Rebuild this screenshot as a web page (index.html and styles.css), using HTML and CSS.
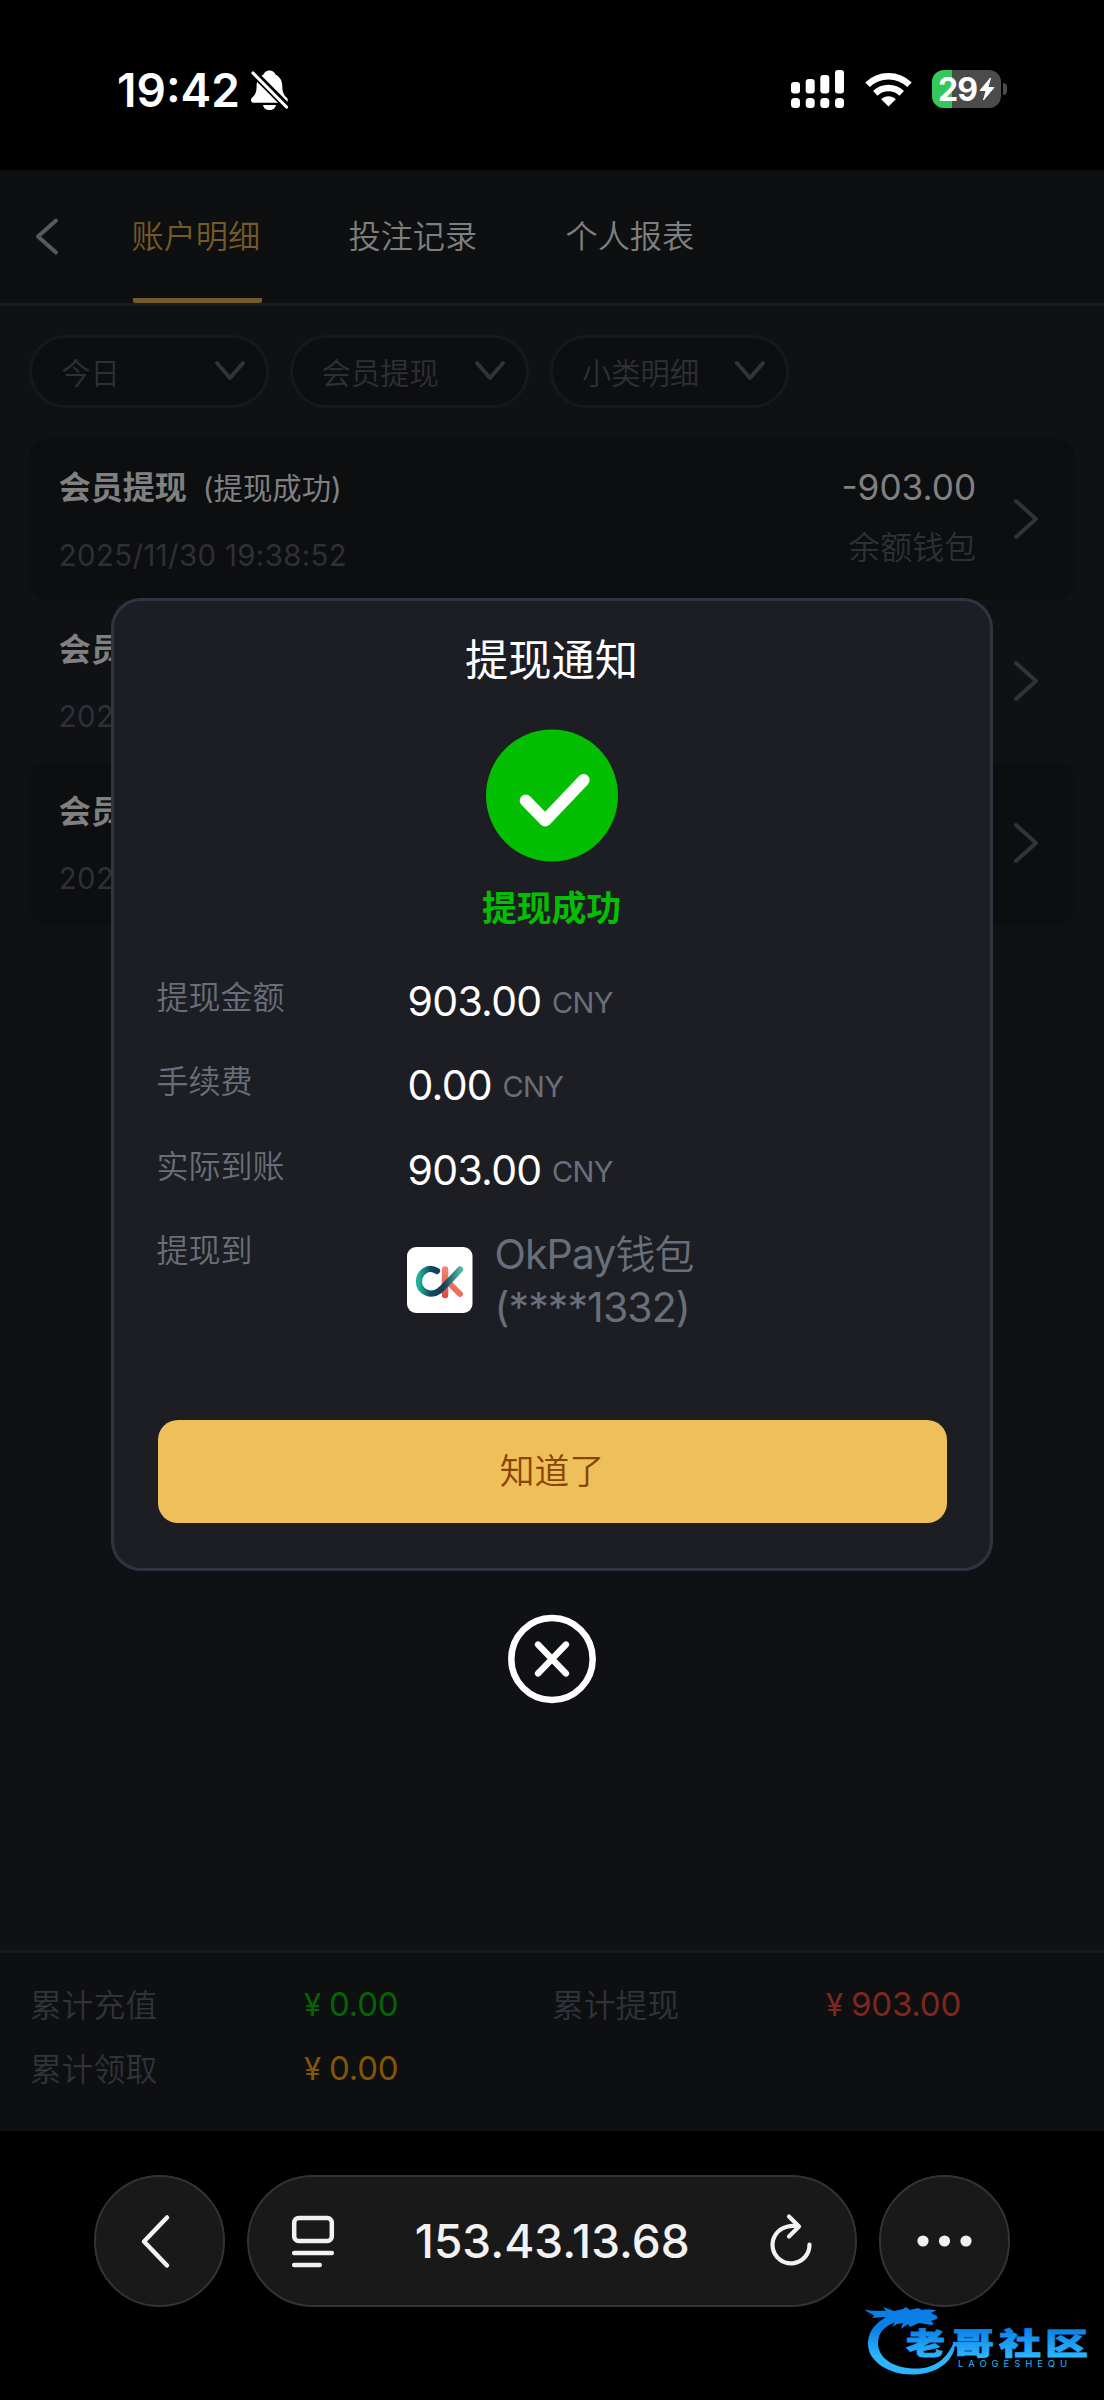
FILE: index.html
```html
<!DOCTYPE html>
<html lang="zh-CN">
<head>
<meta charset="utf-8">
<meta name="viewport" content="width=device-width, initial-scale=1">
<title>账户明细</title>
<link rel="stylesheet" href="styles.css">
</head>
<body>
<div class="screen">
  <div class="status">
    <div class="status-left">
      <span class="clock">19:42</span>
      <svg class="bell" width="38" height="40" viewBox="0 0 38 40">
        <path fill="#fff" d="M18.500 .5c3.600 0 5.200 2.300 6.200 4.200 4.400 2 6.600 6.300 6.600 11.300 0 6.800 1.700 9 4.300 11.600 1 1 1.200 1.700 1.200 2.600 0 1.500-1 2.600-3 2.600H3c-2 0-3-1.100-3-2.600 0-.9.300-1.600 1.200-2.600C4 25 5.600 22.800 5.600 16c0-5 2.300-9.300 6.700-11.300 1-1.900 2.600-4.200 6.200-4.200zM12 35h13c-.5 3-3 5-6.500 5S12.500 38 12 35z"/>
        <path stroke="#000" stroke-width="7.500" d="M2 2.500 38 38.500"/>
        <path stroke="#fff" stroke-width="3.200" stroke-linecap="round" d="M2 3 35.500 37"/>
      </svg>
    </div>
    <div class="status-right">
      <svg class="signal" width="54" height="38" viewBox="0 0 54 38" fill="#fff">
        <rect x="0" y="12" width="9" height="11.500" rx="3"/><rect x="14.700" y="9" width="9" height="14.500" rx="3"/><rect x="29.300" y="5" width="9" height="18.500" rx="3"/><rect x="44" y="0" width="9" height="23.500" rx="3"/>
        <rect x="0" y="28" width="9" height="10" rx="3.500"/><rect x="14.700" y="28" width="9" height="10" rx="3.500"/><rect x="29.300" y="28" width="9" height="10" rx="3.500"/><rect x="44" y="28" width="9" height="10" rx="3.500"/>
      </svg>
      <svg class="wifi" width="47" height="35" viewBox="0 0 47 35">
        <g fill="none" stroke="#fff" stroke-width="6.500"><path d="M2.500 12.800a30 30 0 0 1 42 0"/><path d="M10.300 21.300a19 19 0 0 1 26.400 0"/></g>
        <path fill="#fff" d="M23.500 34.500 16.200 27.200c3.800-4 10.800-4 14.600 0z"/>
      </svg>
      <div class="battery"><div class="battery-level"></div><span>29</span>
        <svg width="16" height="24" viewBox="0 0 16 24"><path fill="#fff" stroke="#fff" stroke-linejoin="round" d="M11.500 1 1 13.500h6.200L4.500 23 15 10.500H8.800z"/></svg>
      </div>
      <div class="battery-tip"></div>
    </div>
  </div>

  <div class="page">
    <div class="tabs">
      <svg class="tabs-back" width="28" height="40" viewBox="0 0 28 40"><path d="M23 4.500 5 20.500l18 16" fill="none" stroke="#555962" stroke-width="4" stroke-linecap="round" stroke-linejoin="round"/></svg>
      <div class="tab tab-active"><span>账户明细</span></div>
      <div class="tab"><span>投注记录</span></div>
      <div class="tab"><span>个人报表</span></div>
    </div>
    <div class="filters">
      <div class="filter">今日<svg width="32" height="22" viewBox="0 0 32 22"><path d="m3 3 13 15L29 3"/></svg></div>
      <div class="filter">会员提现<svg width="32" height="22" viewBox="0 0 32 22"><path d="m3 3 13 15L29 3"/></svg></div>
      <div class="filter">小类明细<svg width="32" height="22" viewBox="0 0 32 22"><path d="m3 3 13 15L29 3"/></svg></div>
    </div>
    <div class="records">
      <div class="record record-tinted">
        <div class="record-main"><div class="record-title">会员提现<span>(提现成功)</span></div><div class="record-date">2025/11/30 19:38:52</div></div>
        <div class="record-side"><div class="record-amount">-903.00</div><div class="record-wallet">余额钱包</div></div>
        <svg class="record-arrow" width="28" height="42" viewBox="0 0 28 42"><path d="m4 3 20 18-20 18"/></svg>
      </div>
      <div class="record">
        <div class="record-main"><div class="record-title">会员</div><div class="record-date">202</div></div>
        <svg class="record-arrow" width="28" height="42" viewBox="0 0 28 42"><path d="m4 3 20 18-20 18"/></svg>
      </div>
      <div class="record record-tinted">
        <div class="record-main"><div class="record-title">会员</div><div class="record-date">202</div></div>
        <svg class="record-arrow" width="28" height="42" viewBox="0 0 28 42"><path d="m4 3 20 18-20 18"/></svg>
      </div>
    </div>
    <div class="totals">
      <div class="total"><span>累计充值</span><span class="sum sum-green"><i>¥</i>0.00</span></div>
      <div class="total"><span>累计提现</span><span class="sum sum-red"><i>¥</i>903.00</span></div>
      <div class="total"><span>累计领取</span><span class="sum sum-orange"><i>¥</i>0.00</span></div>
    </div>
  </div>

  <div class="browser">
    <div class="glass round"><svg width="40" height="56" viewBox="0 0 40 56"><path d="M28 4.500 5 28.500l23 24" fill="none" stroke="#f2f2f2" stroke-width="4.500" stroke-linecap="round" stroke-linejoin="round"/></svg></div>
    <div class="glass address">
      <svg width="44" height="54" viewBox="0 0 44 54" fill="none" stroke="#f2f2f2" stroke-width="4.500" stroke-linecap="round"><rect x="3.200" y="4" width="37.600" height="23" rx="4.500"/><path d="M3.200 39h37.600M3.200 51h25.500"/></svg>
      <span>153.43.13.68</span>
      <svg width="46" height="56" viewBox="0 0 46 56" fill="none" stroke="#f2f2f2" stroke-width="4.200" stroke-linecap="round" stroke-linejoin="round"><path d="M30 13.500C26 12.500 22.500 12.800 19 13.800A18.500 18.500 0 1 0 41.500 31.500"/><path d="m21 3.500 10 10-10 10"/></svg>
    </div>
    <div class="glass round"><svg width="56" height="12" viewBox="0 0 56 12" fill="#f2f2f2"><circle cx="6" cy="6" r="5.600"/><circle cx="27.500" cy="6" r="5.600"/><circle cx="49" cy="6" r="5.600"/></svg></div>
  </div>

  <div class="dialog-layer">
    <div class="dialog">
      <div class="dialog-title">提现通知</div>
      <svg class="success" width="132" height="133" viewBox="0 0 132 133"><circle cx="66" cy="66.500" r="66" fill="#04be02"/><path d="m39.700 71.500 19.500 20 38.500-40.500" fill="none" stroke="#fff" stroke-width="12" stroke-linecap="round" stroke-linejoin="round"/></svg>
      <div class="dialog-state">提现成功</div>
      <div class="details">
        <div class="detail"><div class="label">提现金额</div><div class="value">903.00<span>CNY</span></div></div>
        <div class="detail"><div class="label">手续费</div><div class="value">0.00<span>CNY</span></div></div>
        <div class="detail"><div class="label">实际到账</div><div class="value">903.00<span>CNY</span></div></div>
        <div class="detail"><div class="label">提现到</div>
          <div class="account">
            <svg width="66" height="66" viewBox="0 0 66 66">
              <defs>
                <linearGradient id="okc" x1="0" x2="1"><stop offset="0" stop-color="#22b096"/><stop offset=".3" stop-color="#12465f"/><stop offset=".6" stop-color="#123f58"/><stop offset="1" stop-color="#4cb5a3"/></linearGradient>
                <linearGradient id="okk" x1="0" x2="0" y1="0" y2="1"><stop offset="0" stop-color="#f38a70"/><stop offset="1" stop-color="#d64a45"/></linearGradient>
              </defs>
              <rect width="65.500" height="66" rx="9" fill="#fff"/>
              <rect x="34.800" y="19.300" width="6.500" height="32" rx="3.200" fill="url(#okk)"/>
              <path d="M43 37 53 47" stroke="#e9705d" stroke-width="6" stroke-linecap="round"/>
              <path d="M30 24C21 18.500 12 25.500 12 34.500c0 10.500 12 15.500 20 9.500C37 40 47 29 53 22.500" fill="none" stroke="url(#okc)" stroke-width="6.200" stroke-linecap="round"/>
            </svg>
            <div>OkPay<b>钱包</b><br>(****1332)</div>
          </div>
        </div>
      </div>
      <div class="confirm">知道了</div>
    </div>
    <svg class="close" width="88" height="90" viewBox="0 0 88 90" fill="none" stroke="#fff"><ellipse cx="44" cy="45" rx="40.700" ry="41" stroke-width="6.500"/><path d="m30 30.500 28 29M58 30.500l-28 29" stroke-width="6.300" stroke-linecap="round"/></svg>
  </div>

  <svg class="watermark" width="236" height="84" viewBox="0 0 236 84">
    <defs><linearGradient id="sky" gradientUnits="userSpaceOnUse" x1="0" y1="25" x2="0" y2="54"><stop offset="0" stop-color="#0a7fe6"/><stop offset="1" stop-color="#2cb6ff"/></linearGradient></defs>
    <g fill="url(#sky)">
      <path d="M38 10C18 15 8 27 8 41c0 17 20 30.500 44 30.500 22 0 38-10 42.500-25.500v-8C87 55 76 65.500 56 65.500c-22 0-38-10-38-25.500 0-12 9-20 26-23z"/>
      <path d="M5 6.500c7 2 12 1 21 1.500l-3-4 11 4 9-2 3-2 4 3 8-2 4 2c6-1 11 0 15 0l-6 3 6 3c2 3-3 4-6 5 3 2 3 4 0 4l-12-2-9 4-2-3-7 5 2-6-6 1-5 3 3-5-9 0 2-4-5-1-11 1C18 11 9 12 5 6.500z"/>
      <g class="watermark-name"><text x="46" y="51" textLength="39" lengthAdjust="spacingAndGlyphs">老</text><text x="92" y="51" textLength="42" lengthAdjust="spacingAndGlyphs">哥</text><text x="139" y="51" textLength="42" lengthAdjust="spacingAndGlyphs">社</text><text x="185" y="51" textLength="43" lengthAdjust="spacingAndGlyphs">区</text></g>
      <text class="watermark-latin" x="98" y="63.500" textLength="109">LAOGESHEQU</text>
    </g>
  </svg>
</div>
</body>
</html>
```
FILE: styles.css
```css
* { box-sizing: border-box; }
body { margin: 0; background: #000; }
svg { display: block; flex: none; }

.screen {
  position: relative;
  display: flex;
  flex-direction: column;
  width: 1104px;
  height: 2400px;
  overflow: hidden;
  background: #000;
  font-family: Inter, "Noto Sans CJK SC", sans-serif;
  font-weight: 350;
  color: #fff;
  white-space: nowrap;
}

/* status bar */
.status { display: flex; justify-content: space-between; height: 170px; padding: 70px 97px 0 117px; }
.status-left, .status-right { display: flex; align-items: flex-start; }
.clock { width: 134px; font-size: 46px; font-weight: 600; line-height: 40px; }
.bell { margin-top: 0; }
.wifi { margin: 2px 20px 0 20px; }
.battery {
  position: relative;
  display: flex;
  align-items: center;
  justify-content: center;
  gap: 2px;
  width: 69px;
  height: 38px;
  border-radius: 12px;
  overflow: hidden;
  background: #4b4b4b;
  font-size: 32px;
  font-weight: 700;
  letter-spacing: -1px;
}
.battery-level { position: absolute; inset: 0 auto 0 0; width: 20px; background: #34c759; }
.battery span, .battery svg { position: relative; }
.battery-tip { width: 4px; height: 12px; margin: 13px 0 0 2px; border-radius: 0 5px 5px 0; background: #4b4b4b; }

/* page */
.page { display: flex; flex-direction: column; height: 1961px; background: #0f1115; }
.tabs { display: flex; height: 136px; padding-left: 33px; border-bottom: 3px solid #1a1b21; background: #0e0f11; }
.tabs-back { margin: 46px 72px 0 0; }
.tab { width: 129px; margin-right: 88px; font-size: 32.200px; line-height: 133px; height: 133px; color: #7f7f7f; }
.tab span { margin-left: -1.500px; }
.tab-active { color: #745a26; border-bottom: 5px solid #745a26; border-radius: 0 0 2px 2px; }

.filters { display: flex; gap: 21px; padding: 29px 29.300px; }
.filter {
  display: flex;
  align-items: center;
  justify-content: space-between;
  width: 239.300px;
  height: 73px;
  padding: 0 20px 2px 29px;
  border: 3px solid #17181d;
  border-radius: 37px;
  background: #0d0e10;
  color: #2e3037;
  font-size: 29.300px;
}
.filter path { fill: none; stroke: #313339; stroke-width: 4; stroke-linecap: round; stroke-linejoin: round; }

.records { flex: 1; padding: 1px 29.300px 0; }
.record { display: flex; height: 162.200px; padding: 28px 35px 0 29.500px; border-radius: 20px; }
.record-tinted { background: #0d0e10; }
.record-main { flex: 1; }
.record-title { font-size: 32px; font-weight: 700; line-height: 44px; color: #808080; }
.record-title span { margin-left: 16px; font-size: 29.400px; font-weight: 400; }
.record-date { margin-top: 23px; font-size: 29.400px; font-weight: 400; line-height: 44px; letter-spacing: .35px; color: #2e3037; }
.record-side { text-align: right; margin-right: 35.500px; }
.record-amount { font-size: 35.200px; font-weight: 400; line-height: 43px; color: #808080; }
.record-wallet { margin-top: 17px; font-size: 32px; line-height: 44px; color: #2e3037; }
.record-arrow { margin-top: 32px; }
.record-arrow path { fill: none; stroke: #313337; stroke-width: 4; stroke-linecap: round; stroke-linejoin: round; }

.totals {
  display: grid;
  grid-template-columns: 522px 1fr;
  grid-auto-rows: 64px;
  height: 181px;
  padding: 18px 30px;
  border-top: 3px solid #17191d;
  background: #0e0f11;
}
.total { display: flex; align-items: center; font-size: 31.800px; color: #30333a; }
.total > span:first-child { width: 274px; }
.sum { padding-top: 1px; font-size: 33px; font-weight: 400; letter-spacing: -.2px; }
.sum i { display: inline-block; width: 25px; font-style: normal; font-size: 31px; }
.sum-green { color: #036503; }
.sum-red { color: #7d281f; }
.sum-orange { color: #835603; }

/* browser bar */
.browser { display: flex; gap: 22px; padding: 44px 94px 0 93.500px; }
.glass { display: flex; align-items: center; height: 132px; border: 2px solid #333; border-radius: 66px; background: #191919; }
.round { width: 131px; justify-content: center; }
.address { flex: 1; justify-content: space-between; padding: 0 41px 0 42px; color: #f2f2f2; font-size: 46px; font-weight: 500; }
.address span { padding-left: 2px; }

/* dialog */
.dialog-layer { position: absolute; top: 598px; left: 111px; width: 882px; display: flex; flex-direction: column; align-items: center; }
.dialog {
  display: flex;
  flex-direction: column;
  align-items: center;
  width: 882px;
  height: 973px;
  padding: 31px 43.500px 0;
  border: 3px solid #2f3540;
  border-radius: 30px;
  background: #1d1e23;
}
.dialog-title { margin-left: -1px; font-size: 43.300px; font-weight: 400; line-height: 56px; }
.success { margin-top: 41px; }
.dialog-state { margin: 22px 0 0 -1px; font-size: 34.800px; font-weight: 700; line-height: 48px; color: #04be02; }
.details { align-self: stretch; margin-top: 41px; }
.detail { display: flex; height: 84.300px; }
.label { width: 251px; margin-left: -1px; font-size: 32px; line-height: 49px; color: #696f7a; }
.value { font-size: 41px; font-weight: 400; line-height: 56px; letter-spacing: -.7px; }
.value span { position: relative; top: -3px; margin-left: 10.500px; font-size: 29px; letter-spacing: -.7px; color: #696f7a; }
.account { display: flex; align-items: flex-start; gap: 22px; font-size: 41px; font-weight: 400; line-height: 52px; letter-spacing: -.9px; color: #696f7a; }
.account svg { margin-top: 21.500px; margin-left: -1px; }
.account div { margin-top: 2.500px; }
.account b { font-weight: 350; font-size: 40px; }
.confirm {
  align-self: stretch;
  height: 102.500px;
  margin: 110px 0 0;
  border-radius: 20px;
  background: #eec05a;
  color: #8a4408;
  font-size: 34.800px;
  line-height: 103px;
  text-align: center;
}
.close { margin-top: 43px; }

/* watermark */
.watermark { position: absolute; left: 860px; top: 2303px; }
.watermark-name { font: 900 30px "Noto Sans CJK SC", sans-serif; stroke: url(#sky); stroke-width: .8px; }
.watermark-latin { font: 400 9.500px Inter, sans-serif; }
```
